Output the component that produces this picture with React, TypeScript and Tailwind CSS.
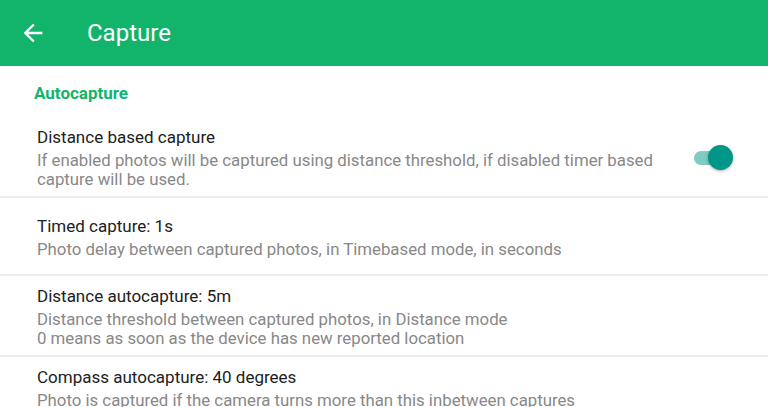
import React from "react";

const rows = [
  {
    title: "Timed capture: 1s",
    desc: ["Photo delay between captured photos, in Timebased mode, in seconds"],
  },
  {
    title: "Distance autocapture: 5m",
    desc: [
      "Distance threshold between captured photos, in Distance mode",
      "0 means as soon as the device has new reported location",
    ],
  },
  {
    title: "Compass autocapture: 40 degrees",
    desc: ["Photo is captured if the camera turns more than this inbetween captures"],
  },
];

export default function App() {
  return (
    <main className="w-[768px] h-[407px] overflow-hidden bg-white font-['Roboto',sans-serif]">
      {/* Toolbar */}
      <header className="h-[66px] bg-[#12b46c] flex items-center text-white">
        <svg className="ml-[19px] w-[28px] h-[28px]" viewBox="0 0 24 24" fill="white">
          <path d="M20 11H7.83l5.59-5.59L12 4l-8 8 8 8 1.41-1.41L7.83 13H20v-2z" />
        </svg>
        <h1 className="ml-[40px] text-[24px] leading-none">Capture</h1>
      </header>

      {/* Category */}
      <p className="pl-[34px] pt-[17px] text-[17px] leading-[20px] font-bold text-[#12b46c]">Autocapture</p>

      {/* Switch row */}
      <div className="flex items-center pl-[37px] pr-[35px] pt-[23px] pb-[7px] border-b-2 border-[#ececec]">
        <div className="flex-1 mr-[24px]">
          <p className="text-[17px] leading-[22px] text-[#212121]">Distance based capture</p>
          <p className="mt-[3px] text-[16.8px] leading-[19px] text-[#888]">
            If enabled photos will be captured using distance threshold, if disabled timer based capture will be used.
          </p>
        </div>
        <div className="relative w-[39px] h-[25px] flex items-center">
          <div className="w-[34px] h-[14px] rounded-full bg-[#80cbc4]" />
          <div className="absolute right-0 w-[25px] h-[25px] rounded-full bg-[#009688] shadow-[0_1px_3px_rgba(0,0,0,0.35)]" />
        </div>
      </div>

      {rows.map((row, i) => (
        <div
          key={row.title}
          className={`flex flex-col justify-center pl-[37px] pt-[9px] pb-[7px] border-b-2 border-[#ececec] ${
            i < rows.length - 1 ? "min-h-[78px]" : ""
          }`}
        >
          <p className="text-[17px] leading-[22px] text-[#212121]">{row.title}</p>
          <div className="mt-[3px]">
            {row.desc.map((d) => (
              <p key={d} className="text-[16.8px] leading-[19px] text-[#888]">
                {d}
              </p>
            ))}
          </div>
        </div>
      ))}
    </main>
  );
}
